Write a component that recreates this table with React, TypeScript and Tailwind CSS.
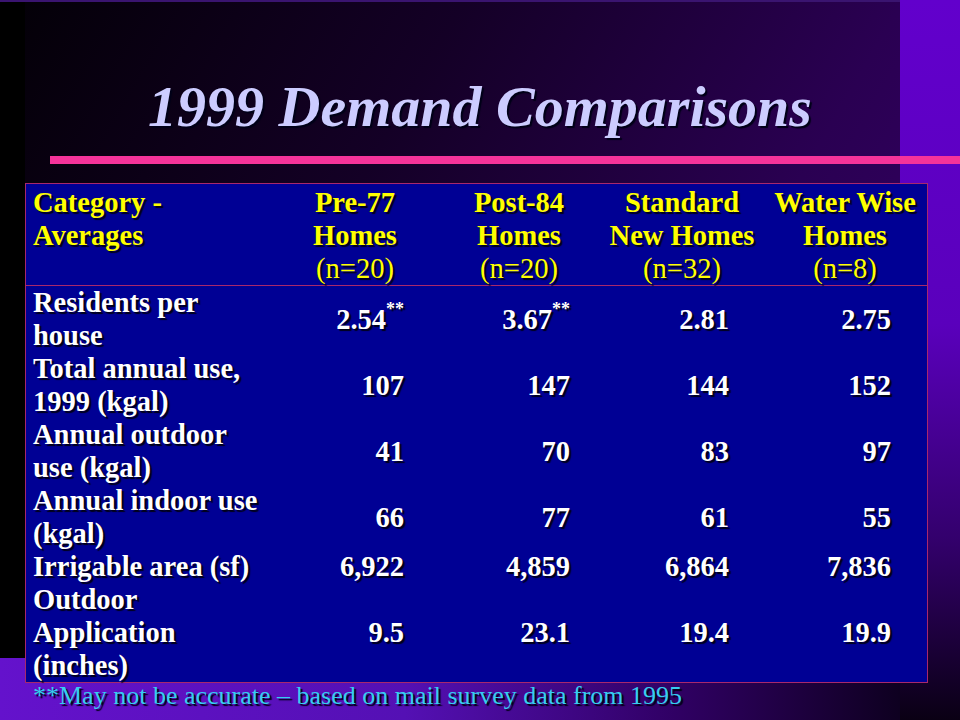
const rows = [
  { label: ["Residents per", "house"], values: ["2.54", "3.67", "2.81", "2.75"], stars: [true, true, false, false] },
  { label: ["Total annual use,", "1999 (kgal)"], values: ["107", "147", "144", "152"] },
  { label: ["Annual outdoor", "use (kgal)"], values: ["41", "70", "83", "97"] },
  { label: ["Annual indoor use", "(kgal)"], values: ["66", "77", "61", "55"] },
  { label: ["Irrigable area (sf)"], values: ["6,922", "4,859", "6,864", "7,836"] },
  { label: ["Outdoor", "Application", "(inches)"], values: ["9.5", "23.1", "19.4", "19.9"] },
];

const headers = [
  { top: ["Pre-77", "Homes"], n: "(n=20)", cls: "" },
  { top: ["Post-84", "Homes"], n: "(n=20)", cls: "" },
  { top: ["Standard", "New Homes"], n: "(n=32)", cls: "" },
  { top: ["Water Wise", "Homes"], n: "(n=8)", cls: "pl-[7px]" },
];

// right padding of the value in each column
const valuePad = ["pr-[26px]", "pr-[38px]", "pr-[27px]", "pr-[36px]"];

const shadow = "[text-shadow:2px_2px_1px_#000018]";

const App = () => {
  return (
    <div
      className="grid w-[960px] h-[720px] overflow-hidden grid-cols-[25px_875px_60px] grid-rows-[2px_656px_62px] bg-black"
      style={{ fontFamily: '"Liberation Serif", "Times New Roman", serif' }}
    >
      {/* background panels */}
      <div className="col-start-1 col-end-3 row-start-1 bg-[#3a1470]" />
      <div className="col-start-1 row-start-2 bg-black" />
      <div className="col-start-2 row-start-2 bg-[linear-gradient(120deg,#040008_0%,#140026_35%,#2a0052_70%,#36006a_100%)]" />
      <div className="col-start-3 row-start-1 row-end-4 bg-[linear-gradient(180deg,#6200cc_0%,#5a00bc_45%,#33006c_75%,#0a0014_100%)]" />
      <div className="col-start-1 col-end-3 row-start-3 bg-[linear-gradient(90deg,#6412cc_0%,#5410b4_45%,#300064_75%,#0e0020_100%)]" />

      {/* slide content */}
      <div className="col-start-1 col-end-4 row-start-1 row-end-4 flex flex-col">
        <h1
          className={`pt-[77px] text-center text-[58px] leading-[60px] font-bold italic text-[#ccccff] ${shadow}`}
        >
          1999 Demand Comparisons
        </h1>
        <div className="mt-[19px] ml-[50px] h-[8px] bg-[#f5339a]" />

        <div className="mt-[19px] ml-[25px] w-[903px] border border-[#a8286c] bg-[#000094] text-[28.5px] leading-[33px] font-bold">
          <div className={`grid grid-cols-[254px_150px_178px_148px_171px] pt-[2px] border-b border-[#a8286c] text-[#ffff00] ${shadow}`}>
            <div className="pl-[7px]">
              <div>Category -</div>
              <div>Averages</div>
            </div>
            {headers.map((h) => (
              <div key={h.n + h.top[0]} className={`text-center ${h.cls}`}>
                {h.top.map((t) => (
                  <div key={t}>{t}</div>
                ))}
                <div className="font-normal">{h.n}</div>
              </div>
            ))}
          </div>

          {rows.map((r) => (
            <div key={r.label[0]} className={`grid grid-cols-[254px_150px_178px_148px_171px] text-white ${shadow}`}>
              <div className="pl-[7px]">
                {r.label.map((l) => (
                  <div key={l}>{l}</div>
                ))}
              </div>
              {r.values.map((v, i) => (
                <div key={i} className={`flex items-center justify-end ${valuePad[i]}`}>
                  <span>{v}</span>
                  {r.stars && r.stars[i] && (
                    <span className="self-center -mt-[20px] text-[18px] leading-[18px]">**</span>
                  )}
                </div>
              ))}
            </div>
          ))}
        </div>

        <p className={`pl-[33px] text-[26px] leading-[26px] text-[#36cdf0] ${shadow}`}>
          **May not be accurate – based on mail survey data from 1995
        </p>
      </div>
    </div>
  );
};

export default App;
